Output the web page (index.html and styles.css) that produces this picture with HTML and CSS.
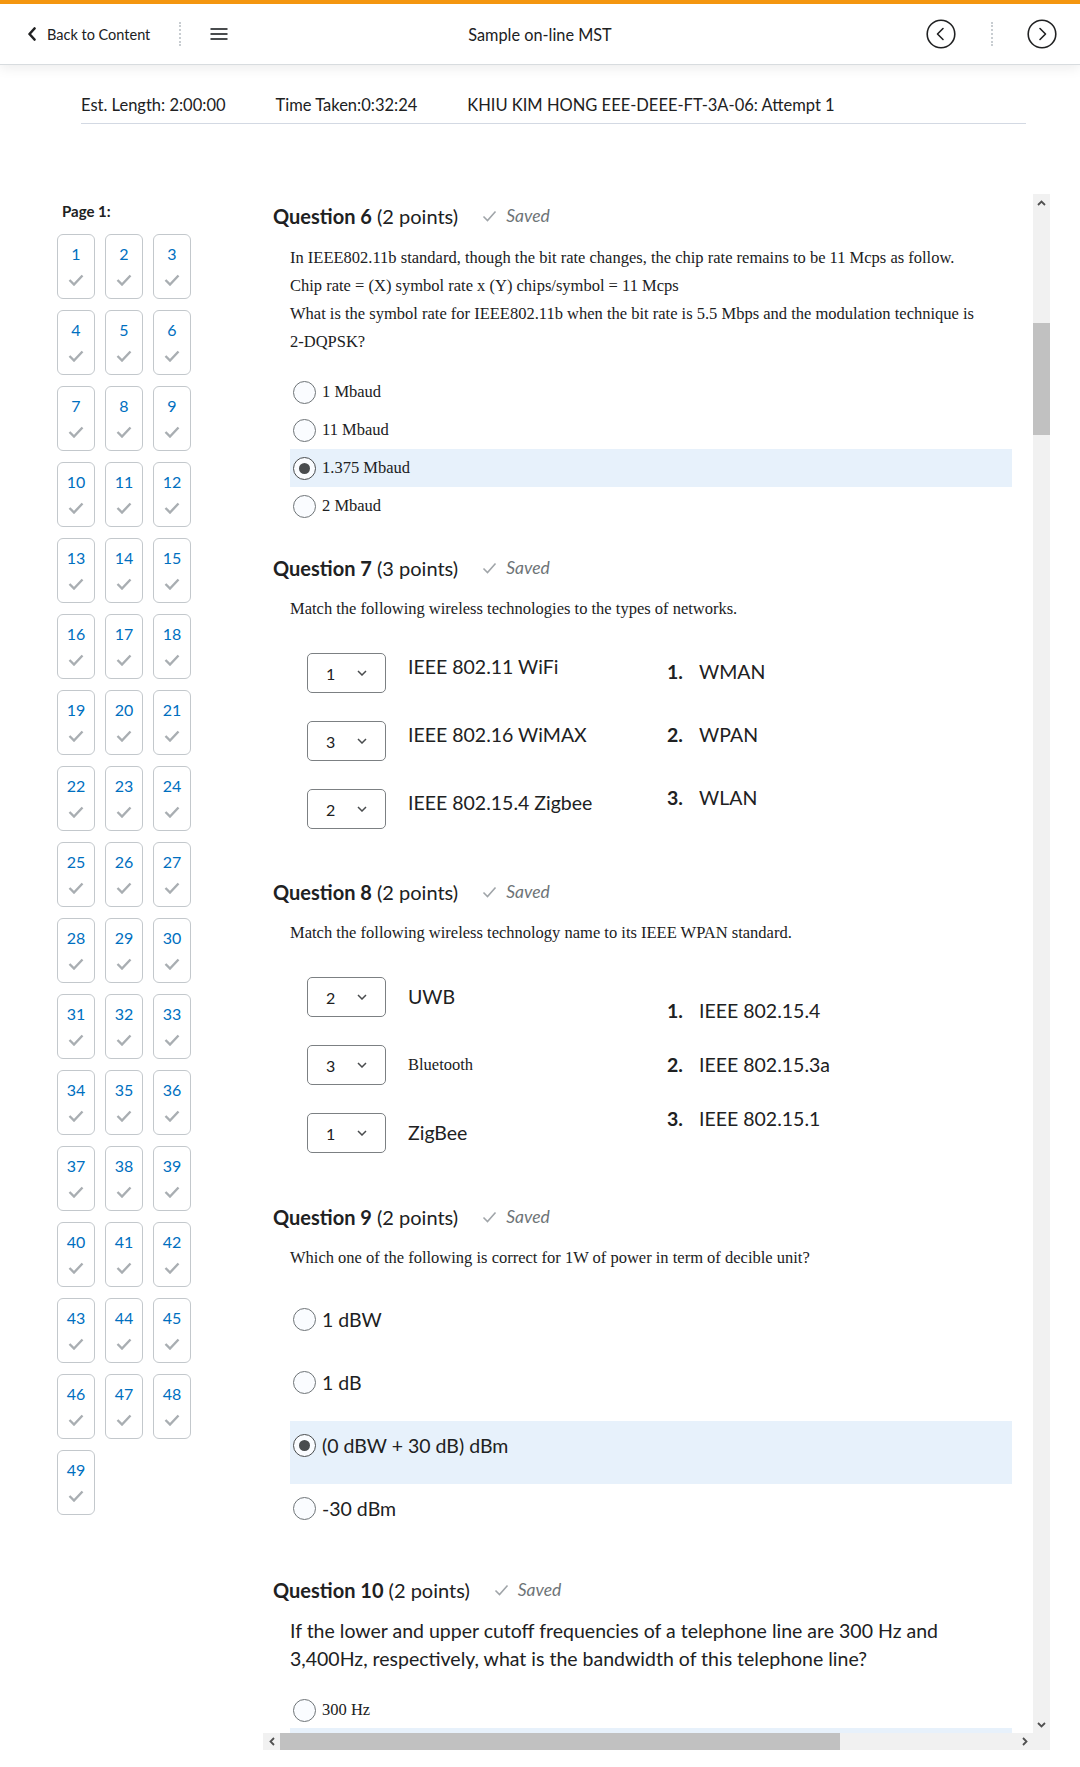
FILE: index.html
```html
<!DOCTYPE html>
<html>
<head>
<meta charset="utf-8">
<link rel="stylesheet" href="styles.css">
</head>
<body>
<header class="topbar">
  <div class="tb-left">
    <svg class="back-ico" width="10" height="14" viewBox="0 0 10 14"><path d="M7.5 1.5 L2.5 7 L7.5 12.5" fill="none" stroke="#202122" stroke-width="2.6" stroke-linecap="round" stroke-linejoin="round"/></svg>
    <span class="back-txt">Back to Content</span>
    <span class="vsep"></span>
    <svg class="hamb" width="18" height="14" viewBox="0 0 18 14"><path d="M0.5 2 H17.5 M0.5 7 H17.5 M0.5 12 H17.5" stroke="#494c4e" stroke-width="1.8"/></svg>
  </div>
  <div class="tb-title">Sample on-line MST</div>
  <div class="tb-right">
    <svg width="30" height="30" viewBox="0 0 30 30"><circle cx="15" cy="15" r="13.8" fill="none" stroke="#202122" stroke-width="1.6"/><path d="M17 9.5 L11.5 15 L17 20.5" fill="none" stroke="#202122" stroke-width="1.6" stroke-linecap="round" stroke-linejoin="round"/></svg>
    <span class="vsep vsep-r"></span>
    <svg width="30" height="30" viewBox="0 0 30 30"><circle cx="15" cy="15" r="13.8" fill="none" stroke="#202122" stroke-width="1.6"/><path d="M13 9.5 L18.5 15 L13 20.5" fill="none" stroke="#202122" stroke-width="1.6" stroke-linecap="round" stroke-linejoin="round"/></svg>
  </div>
</header>

<div class="info">
  <span>Est. Length: 2:00:00</span>
  <span>Time Taken:0:32:24</span>
  <span>KHIU KIM HONG EEE-DEEE-FT-3A-06: Attempt 1</span>
</div>

<div class="main">
  <aside class="side">
    <div class="page-label">Page 1:</div>
    <div class="tiles">
      <div class="tile"><span>1</span><svg viewBox="0 0 16 12"><path d="M1.5 6 L6 10.5 L14.5 1.5"/></svg></div>
      <div class="tile"><span>2</span><svg viewBox="0 0 16 12"><path d="M1.5 6 L6 10.5 L14.5 1.5"/></svg></div>
      <div class="tile"><span>3</span><svg viewBox="0 0 16 12"><path d="M1.5 6 L6 10.5 L14.5 1.5"/></svg></div>
      <div class="tile"><span>4</span><svg viewBox="0 0 16 12"><path d="M1.5 6 L6 10.5 L14.5 1.5"/></svg></div>
      <div class="tile"><span>5</span><svg viewBox="0 0 16 12"><path d="M1.5 6 L6 10.5 L14.5 1.5"/></svg></div>
      <div class="tile"><span>6</span><svg viewBox="0 0 16 12"><path d="M1.5 6 L6 10.5 L14.5 1.5"/></svg></div>
      <div class="tile"><span>7</span><svg viewBox="0 0 16 12"><path d="M1.5 6 L6 10.5 L14.5 1.5"/></svg></div>
      <div class="tile"><span>8</span><svg viewBox="0 0 16 12"><path d="M1.5 6 L6 10.5 L14.5 1.5"/></svg></div>
      <div class="tile"><span>9</span><svg viewBox="0 0 16 12"><path d="M1.5 6 L6 10.5 L14.5 1.5"/></svg></div>
      <div class="tile"><span>10</span><svg viewBox="0 0 16 12"><path d="M1.5 6 L6 10.5 L14.5 1.5"/></svg></div>
      <div class="tile"><span>11</span><svg viewBox="0 0 16 12"><path d="M1.5 6 L6 10.5 L14.5 1.5"/></svg></div>
      <div class="tile"><span>12</span><svg viewBox="0 0 16 12"><path d="M1.5 6 L6 10.5 L14.5 1.5"/></svg></div>
      <div class="tile"><span>13</span><svg viewBox="0 0 16 12"><path d="M1.5 6 L6 10.5 L14.5 1.5"/></svg></div>
      <div class="tile"><span>14</span><svg viewBox="0 0 16 12"><path d="M1.5 6 L6 10.5 L14.5 1.5"/></svg></div>
      <div class="tile"><span>15</span><svg viewBox="0 0 16 12"><path d="M1.5 6 L6 10.5 L14.5 1.5"/></svg></div>
      <div class="tile"><span>16</span><svg viewBox="0 0 16 12"><path d="M1.5 6 L6 10.5 L14.5 1.5"/></svg></div>
      <div class="tile"><span>17</span><svg viewBox="0 0 16 12"><path d="M1.5 6 L6 10.5 L14.5 1.5"/></svg></div>
      <div class="tile"><span>18</span><svg viewBox="0 0 16 12"><path d="M1.5 6 L6 10.5 L14.5 1.5"/></svg></div>
      <div class="tile"><span>19</span><svg viewBox="0 0 16 12"><path d="M1.5 6 L6 10.5 L14.5 1.5"/></svg></div>
      <div class="tile"><span>20</span><svg viewBox="0 0 16 12"><path d="M1.5 6 L6 10.5 L14.5 1.5"/></svg></div>
      <div class="tile"><span>21</span><svg viewBox="0 0 16 12"><path d="M1.5 6 L6 10.5 L14.5 1.5"/></svg></div>
      <div class="tile"><span>22</span><svg viewBox="0 0 16 12"><path d="M1.5 6 L6 10.5 L14.5 1.5"/></svg></div>
      <div class="tile"><span>23</span><svg viewBox="0 0 16 12"><path d="M1.5 6 L6 10.5 L14.5 1.5"/></svg></div>
      <div class="tile"><span>24</span><svg viewBox="0 0 16 12"><path d="M1.5 6 L6 10.5 L14.5 1.5"/></svg></div>
      <div class="tile"><span>25</span><svg viewBox="0 0 16 12"><path d="M1.5 6 L6 10.5 L14.5 1.5"/></svg></div>
      <div class="tile"><span>26</span><svg viewBox="0 0 16 12"><path d="M1.5 6 L6 10.5 L14.5 1.5"/></svg></div>
      <div class="tile"><span>27</span><svg viewBox="0 0 16 12"><path d="M1.5 6 L6 10.5 L14.5 1.5"/></svg></div>
      <div class="tile"><span>28</span><svg viewBox="0 0 16 12"><path d="M1.5 6 L6 10.5 L14.5 1.5"/></svg></div>
      <div class="tile"><span>29</span><svg viewBox="0 0 16 12"><path d="M1.5 6 L6 10.5 L14.5 1.5"/></svg></div>
      <div class="tile"><span>30</span><svg viewBox="0 0 16 12"><path d="M1.5 6 L6 10.5 L14.5 1.5"/></svg></div>
      <div class="tile"><span>31</span><svg viewBox="0 0 16 12"><path d="M1.5 6 L6 10.5 L14.5 1.5"/></svg></div>
      <div class="tile"><span>32</span><svg viewBox="0 0 16 12"><path d="M1.5 6 L6 10.5 L14.5 1.5"/></svg></div>
      <div class="tile"><span>33</span><svg viewBox="0 0 16 12"><path d="M1.5 6 L6 10.5 L14.5 1.5"/></svg></div>
      <div class="tile"><span>34</span><svg viewBox="0 0 16 12"><path d="M1.5 6 L6 10.5 L14.5 1.5"/></svg></div>
      <div class="tile"><span>35</span><svg viewBox="0 0 16 12"><path d="M1.5 6 L6 10.5 L14.5 1.5"/></svg></div>
      <div class="tile"><span>36</span><svg viewBox="0 0 16 12"><path d="M1.5 6 L6 10.5 L14.5 1.5"/></svg></div>
      <div class="tile"><span>37</span><svg viewBox="0 0 16 12"><path d="M1.5 6 L6 10.5 L14.5 1.5"/></svg></div>
      <div class="tile"><span>38</span><svg viewBox="0 0 16 12"><path d="M1.5 6 L6 10.5 L14.5 1.5"/></svg></div>
      <div class="tile"><span>39</span><svg viewBox="0 0 16 12"><path d="M1.5 6 L6 10.5 L14.5 1.5"/></svg></div>
      <div class="tile"><span>40</span><svg viewBox="0 0 16 12"><path d="M1.5 6 L6 10.5 L14.5 1.5"/></svg></div>
      <div class="tile"><span>41</span><svg viewBox="0 0 16 12"><path d="M1.5 6 L6 10.5 L14.5 1.5"/></svg></div>
      <div class="tile"><span>42</span><svg viewBox="0 0 16 12"><path d="M1.5 6 L6 10.5 L14.5 1.5"/></svg></div>
      <div class="tile"><span>43</span><svg viewBox="0 0 16 12"><path d="M1.5 6 L6 10.5 L14.5 1.5"/></svg></div>
      <div class="tile"><span>44</span><svg viewBox="0 0 16 12"><path d="M1.5 6 L6 10.5 L14.5 1.5"/></svg></div>
      <div class="tile"><span>45</span><svg viewBox="0 0 16 12"><path d="M1.5 6 L6 10.5 L14.5 1.5"/></svg></div>
      <div class="tile"><span>46</span><svg viewBox="0 0 16 12"><path d="M1.5 6 L6 10.5 L14.5 1.5"/></svg></div>
      <div class="tile"><span>47</span><svg viewBox="0 0 16 12"><path d="M1.5 6 L6 10.5 L14.5 1.5"/></svg></div>
      <div class="tile"><span>48</span><svg viewBox="0 0 16 12"><path d="M1.5 6 L6 10.5 L14.5 1.5"/></svg></div>
      <div class="tile"><span>49</span><svg viewBox="0 0 16 12"><path d="M1.5 6 L6 10.5 L14.5 1.5"/></svg></div>
    </div>
  </aside>

  <div class="frame">
    <div class="viewport">
      <!-- Question 6 -->
      <section class="q q6">
        <div class="qh"><b>Question 6</b> (2 points)<span class="saved"><svg width="15" height="12" viewBox="0 0 15 12"><path d="M1.5 6.5 L5.5 10.5 L13.5 1.5" fill="none" stroke="#a0a5a9" stroke-width="1.6"/></svg><i>Saved</i></span></div>
        <div class="qbody serif">
          <p>In IEEE802.11b standard, though the bit rate changes, the chip rate remains to be 11 Mcps as follow.</p>
          <p>Chip rate = (X) symbol rate x (Y) chips/symbol = 11 Mcps</p>
          <p>What is the symbol rate for IEEE802.11b when the bit rate is 5.5 Mbps and the modulation technique is <span class="nowrap">2-DQPSK?</span></p>
        </div>
        <div class="opts opts-s serif">
          <div class="opt"><span class="radio"></span>1 Mbaud</div>
          <div class="opt"><span class="radio"></span>11 Mbaud</div>
          <div class="opt sel-opt"><span class="radio on"></span>1.375 Mbaud</div>
          <div class="opt"><span class="radio"></span>2 Mbaud</div>
        </div>
      </section>

      <!-- Question 7 -->
      <section class="q q7">
        <div class="qh"><b>Question 7</b> (3 points)<span class="saved"><svg width="15" height="12" viewBox="0 0 15 12"><path d="M1.5 6.5 L5.5 10.5 L13.5 1.5" fill="none" stroke="#a0a5a9" stroke-width="1.6"/></svg><i>Saved</i></span></div>
        <div class="qbody serif"><p>Match the following wireless technologies to the types of networks.</p></div>
        <div class="match">
          <div class="mleft">
            <div class="mrow"><div class="select">1<svg width="10" height="6" viewBox="0 0 10 6"><path d="M1 1 L5 5 L9 1" fill="none" stroke="#494c4e" stroke-width="1.5"/></svg></div><span class="mlabel">IEEE 802.11 WiFi</span></div>
            <div class="mrow"><div class="select">3<svg width="10" height="6" viewBox="0 0 10 6"><path d="M1 1 L5 5 L9 1" fill="none" stroke="#494c4e" stroke-width="1.5"/></svg></div><span class="mlabel">IEEE 802.16 WiMAX</span></div>
            <div class="mrow"><div class="select">2<svg width="10" height="6" viewBox="0 0 10 6"><path d="M1 1 L5 5 L9 1" fill="none" stroke="#494c4e" stroke-width="1.5"/></svg></div><span class="mlabel">IEEE 802.15.4 Zigbee</span></div>
          </div>
          <ol class="mright">
            <li><b>1.</b><span>WMAN</span></li>
            <li><b>2.</b><span>WPAN</span></li>
            <li><b>3.</b><span>WLAN</span></li>
          </ol>
        </div>
      </section>

      <!-- Question 8 -->
      <section class="q q8">
        <div class="qh"><b>Question 8</b> (2 points)<span class="saved"><svg width="15" height="12" viewBox="0 0 15 12"><path d="M1.5 6.5 L5.5 10.5 L13.5 1.5" fill="none" stroke="#a0a5a9" stroke-width="1.6"/></svg><i>Saved</i></span></div>
        <div class="qbody serif"><p>Match the following wireless technology name to its IEEE WPAN standard.</p></div>
        <div class="match">
          <div class="mleft">
            <div class="mrow"><div class="select">2<svg width="10" height="6" viewBox="0 0 10 6"><path d="M1 1 L5 5 L9 1" fill="none" stroke="#494c4e" stroke-width="1.5"/></svg></div><span class="mlabel">UWB</span></div>
            <div class="mrow"><div class="select">3<svg width="10" height="6" viewBox="0 0 10 6"><path d="M1 1 L5 5 L9 1" fill="none" stroke="#494c4e" stroke-width="1.5"/></svg></div><span class="mlabel serif small">Bluetooth</span></div>
            <div class="mrow"><div class="select">1<svg width="10" height="6" viewBox="0 0 10 6"><path d="M1 1 L5 5 L9 1" fill="none" stroke="#494c4e" stroke-width="1.5"/></svg></div><span class="mlabel">ZigBee</span></div>
          </div>
          <ol class="mright">
            <li><b>1.</b><span>IEEE 802.15.4</span></li>
            <li><b>2.</b><span>IEEE 802.15.3a</span></li>
            <li><b>3.</b><span>IEEE 802.15.1</span></li>
          </ol>
        </div>
      </section>

      <!-- Question 9 -->
      <section class="q q9">
        <div class="qh"><b>Question 9</b> (2 points)<span class="saved"><svg width="15" height="12" viewBox="0 0 15 12"><path d="M1.5 6.5 L5.5 10.5 L13.5 1.5" fill="none" stroke="#a0a5a9" stroke-width="1.6"/></svg><i>Saved</i></span></div>
        <div class="qbody serif"><p>Which one of the following is correct for 1W of power in term of decible unit?</p></div>
        <div class="opts opts-l">
          <div class="opt"><span class="radio"></span>1 dBW</div>
          <div class="opt"><span class="radio"></span>1 dB</div>
          <div class="opt sel-opt"><span class="radio on"></span>(0 dBW + 30 dB) dBm</div>
          <div class="opt"><span class="radio"></span>-30 dBm</div>
        </div>
      </section>

      <!-- Question 10 -->
      <section class="q q10">
        <div class="qh"><b>Question 10</b> (2 points)<span class="saved"><svg width="15" height="12" viewBox="0 0 15 12"><path d="M1.5 6.5 L5.5 10.5 L13.5 1.5" fill="none" stroke="#a0a5a9" stroke-width="1.6"/></svg><i>Saved</i></span></div>
        <div class="qbody sans"><p>If the lower and upper cutoff frequencies of a telephone line are 300 Hz and<br>3,400Hz, respectively, what is the bandwidth of this telephone line?</p></div>
        <div class="opts opts-s serif">
          <div class="opt"><span class="radio"></span>300 Hz</div>
          <div class="opt sel-opt"></div>
        </div>
      </section>
    </div>

    <div class="vbar">
      <div class="sbtn"><svg width="9" height="6" viewBox="0 0 9 6"><path d="M1 5 L4.5 1.5 L8 5" fill="none" stroke="#505050" stroke-width="1.8"/></svg></div>
      <div class="vtrack"><div class="vthumb"></div></div>
      <div class="sbtn"><svg width="9" height="6" viewBox="0 0 9 6"><path d="M1 1 L4.5 4.5 L8 1" fill="none" stroke="#505050" stroke-width="1.8"/></svg></div>
    </div>
    <div class="hbar">
      <div class="sbtn"><svg width="6" height="9" viewBox="0 0 6 9"><path d="M5 1 L1.5 4.5 L5 8" fill="none" stroke="#505050" stroke-width="1.8"/></svg></div>
      <div class="htrack"><div class="hthumb"></div></div>
      <div class="sbtn"><svg width="6" height="9" viewBox="0 0 6 9"><path d="M1 1 L4.5 4.5 L1 8" fill="none" stroke="#505050" stroke-width="1.8"/></svg></div>
    </div>
    <div class="corner"></div>
  </div>
</div>
</body>
</html>
```

FILE: styles.css
```css
* { box-sizing: border-box; margin: 0; padding: 0; }

body {
  width: 1080px;
  height: 1767px;
  overflow: hidden;
  background: #ffffff;
  font-family: Lato, "Noto Sans", sans-serif;
  color: #202122;
}

.serif { font-family: "Liberation Serif", "Times New Roman", serif; }

.nowrap { white-space: nowrap; }

/* ---------- top bar ---------- */
.topbar {
  height: 65px;
  border-top: 4px solid #f4960f;
  border-bottom: 1px solid #d8dcdf;
  box-shadow: 0 3px 12px rgba(0, 0, 0, 0.08);
  display: grid;
  grid-template-columns: 1fr auto 1fr;
  align-items: center;
  position: relative;
  z-index: 2;
  background: #fff;
}

.tb-left {
  display: flex;
  align-items: center;
  padding-left: 27px;
}

.back-ico { display: block; margin-right: 10px; }

.back-txt {
  font-size: 14.5px;
  color: #202122;
}

.vsep {
  display: block;
  width: 0;
  height: 24px;
  border-left: 2px dotted #c8cdd1;
  margin-left: 29px;
}

.hamb { display: block; margin-left: 29px; }

.tb-title {
  font-size: 16.3px;
  color: #202122;
}

.tb-right {
  display: flex;
  align-items: center;
  justify-content: flex-end;
  padding-right: 23px;
}

.tb-right svg { display: block; }

.vsep-r { margin: 0 34px 0 35px; }

/* ---------- info row ---------- */
.info {
  margin: 0 54px 0 81px;
  padding: 30px 0 8px;
  border-bottom: 1px solid #d3d9e3;
  display: flex;
  gap: 50px;
  font-size: 16.5px;
  line-height: 20px;
  color: #202122;
}

/* ---------- main ---------- */
.main {
  display: flex;
  margin-top: 70px;
}

.side {
  width: 263px;
  padding-left: 57px;
  padding-top: 7px;
}

.page-label {
  font-size: 15px;
  font-weight: 700;
  line-height: 20px;
  margin-left: 5px;
  color: #202122;
}

.tiles {
  margin-top: 13px;
  display: grid;
  grid-template-columns: repeat(3, 38px);
  column-gap: 10px;
  row-gap: 11px;
}

.tile {
  height: 65px;
  border: 1px solid #c3c8cc;
  border-radius: 6px;
  display: flex;
  flex-direction: column;
  align-items: center;
  padding-top: 9px;
}

.tile span {
  font-size: 16px;
  line-height: 20px;
  color: #006fbf;
}

.tile svg {
  width: 16px;
  height: 12px;
  margin-top: 10px;
}

.tile svg path {
  fill: none;
  stroke: #a9aeb2;
  stroke-width: 2.4;
}

/* ---------- frame with scrollbars ---------- */
.frame {
  display: grid;
  grid-template-columns: 770px 17px;
  grid-template-rows: 1539px 17px;
}

.viewport {
  overflow: hidden;
  padding-top: 10px;
}

.vbar {
  background: #f1f1f1;
  display: flex;
  flex-direction: column;
}

.sbtn {
  width: 17px;
  height: 17px;
  flex: none;
  display: flex;
  align-items: center;
  justify-content: center;
}

.sbtn svg { display: block; }

.vtrack { flex: 1; }

.vthumb {
  margin: 112px 0 0;
  height: 112px;
  background: #c1c1c1;
}

.hbar {
  background: #f1f1f1;
  display: flex;
}

.htrack { flex: 1; display: flex; }

.hthumb {
  width: 560px;
  height: 17px;
  background: #c1c1c1;
}

.corner { background: #f1f1f1; }

/* ---------- questions ---------- */
.q { padding-left: 10px; }

.qh {
  font-size: 20px;
  line-height: 24px;
  display: flex;
  align-items: center;
  white-space: pre;
}

.qh b { font-weight: 700; }

.saved {
  display: inline-flex;
  align-items: center;
  margin-left: 24px;
  font-size: 17.5px;
  color: #6e7477;
}

.saved svg { display: block; margin-right: 9px; }

.saved i { font-style: italic; }

.qbody {
  margin-left: 17px;
  width: 722px;
  margin-top: 15px;
  font-size: 16.5px;
  line-height: 28px;
  color: #202122;
}

.qbody.sans {
  font-size: 19.5px;
  line-height: 28px;
}

.opts { margin-left: 17px; width: 722px; }

.opt {
  display: flex;
  align-items: center;
  padding-left: 3px;
}

.opts-s .opt {
  height: 38px;
  font-size: 16.5px;
}

.opts-l .opt {
  height: 63px;
  align-items: flex-start;
  padding-top: 14px;
  font-size: 19.5px;
  line-height: 22px;
}

.sel-opt { background: #e7f1fb; }

.radio {
  width: 23px;
  height: 23px;
  border-radius: 50%;
  border: 1px solid #6e7477;
  background: #fafcff;
  margin-right: 6px;
  flex: none;
  display: flex;
  align-items: center;
  justify-content: center;
}

.opts-l .radio { margin-top: -1px; }

.radio.on { border-color: #494c4e; }

.radio.on::after {
  content: "";
  width: 11px;
  height: 11px;
  border-radius: 50%;
  background: #494c4e;
}

/* per-question spacing */
.q6 .qbody { margin-top: 16px; }
.q6 .opts { margin-top: 17px; }
.q7 { margin-top: 31px; }
.q7 .match { margin-top: 30px; }
.q8 { margin-top: 51px; }
.q8 .qbody { margin-top: 15px; }
.q8 .match { margin-top: 30px; }
.q9 { margin-top: 52px; }
.q9 .opts { margin-top: 23px; }
.q10 { margin-top: 31px; }
.q10 .qbody { margin-top: 15px; }
.q10 .opts { margin-top: 19px; }
.q10 .opts-s .opt:first-child { height: 36px; }

/* ---------- matching ---------- */
.match {
  margin-left: 34px;
  display: flex;
  align-items: center;
}

.mleft {
  width: 360px;
  display: flex;
  flex-direction: column;
  gap: 28px;
}

.mrow {
  display: flex;
  align-items: center;
  height: 40px;
}

.select {
  width: 79px;
  height: 40px;
  flex: none;
  border: 1px solid #7c8083;
  border-radius: 5px;
  display: flex;
  align-items: center;
  justify-content: space-between;
  padding: 0 18px 0 18px;
  font-size: 16px;
  color: #202122;
  margin-right: 22px;
}

.select svg { display: block; }

.mlabel {
  font-size: 19.5px;
  line-height: 24px;
}

.q7 .mlabel { margin-bottom: 12px; }

.mlabel.small { font-size: 16.5px; }

.mright {
  list-style: none;
  display: flex;
  flex-direction: column;
  font-size: 19.5px;
  line-height: 24px;
}

.mright li { display: flex; }

.mright b {
  width: 32px;
  font-weight: 700;
  color: #202122;
}

.q7 .mright { gap: 39px; margin-bottom: 12px; }
.q8 .mright { gap: 30px; }
```
